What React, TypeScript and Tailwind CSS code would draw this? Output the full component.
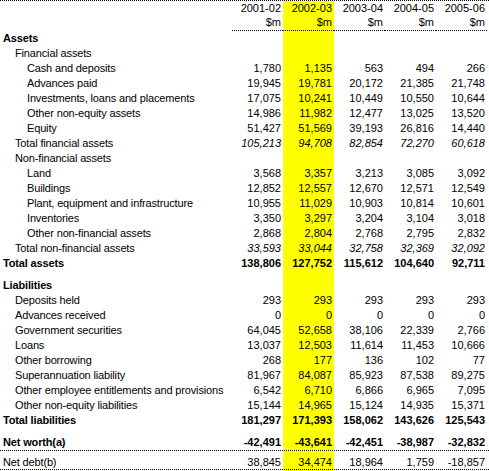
import clsx from "clsx";

type Row =
  | { spacer: number }
  | {
      label: string;
      level?: 0 | 1 | 2;
      values?: string[];
      bold?: boolean;
      italic?: boolean;
    };

const years = ["2001-02", "2002-03", "2003-04", "2004-05", "2005-06"];

const rows: Row[] = [
  { label: "Assets", level: 0, bold: true },
  { label: "Financial assets", level: 1 },
  { label: "Cash and deposits", level: 2, values: ["1,780", "1,135", "563", "494", "266"] },
  { label: "Advances paid", level: 2, values: ["19,945", "19,781", "20,172", "21,385", "21,748"] },
  { label: "Investments, loans and placements", level: 2, values: ["17,075", "10,241", "10,449", "10,550", "10,644"] },
  { label: "Other non-equity assets", level: 2, values: ["14,986", "11,982", "12,477", "13,025", "13,520"] },
  { label: "Equity", level: 2, values: ["51,427", "51,569", "39,193", "26,816", "14,440"] },
  { label: "Total financial assets", level: 1, italic: true, values: ["105,213", "94,708", "82,854", "72,270", "60,618"] },
  { label: "Non-financial assets", level: 1 },
  { label: "Land", level: 2, values: ["3,568", "3,357", "3,213", "3,085", "3,092"] },
  { label: "Buildings", level: 2, values: ["12,852", "12,557", "12,670", "12,571", "12,549"] },
  { label: "Plant, equipment and infrastructure", level: 2, values: ["10,955", "11,029", "10,903", "10,814", "10,601"] },
  { label: "Inventories", level: 2, values: ["3,350", "3,297", "3,204", "3,104", "3,018"] },
  { label: "Other non-financial assets", level: 2, values: ["2,868", "2,804", "2,768", "2,795", "2,832"] },
  { label: "Total non-financial assets", level: 1, italic: true, values: ["33,593", "33,044", "32,758", "32,369", "32,092"] },
  { label: "Total assets", level: 0, bold: true, values: ["138,806", "127,752", "115,612", "104,640", "92,711"] },
  { spacer: 7 },
  { label: "Liabilities", level: 0, bold: true },
  { label: "Deposits held", level: 1, values: ["293", "293", "293", "293", "293"] },
  { label: "Advances received", level: 1, values: ["0", "0", "0", "0", "0"] },
  { label: "Government securities", level: 1, values: ["64,045", "52,658", "38,106", "22,339", "2,766"] },
  { label: "Loans", level: 1, values: ["13,037", "12,503", "11,614", "11,453", "10,666"] },
  { label: "Other borrowing", level: 1, values: ["268", "177", "136", "102", "77"] },
  { label: "Superannuation liability", level: 1, values: ["81,967", "84,087", "85,923", "87,538", "89,275"] },
  { label: "Other employee entitlements and provisions", level: 1, values: ["6,542", "6,710", "6,866", "6,965", "7,095"] },
  { label: "Other non-equity liabilities", level: 1, values: ["15,144", "14,965", "15,124", "14,935", "15,371"] },
  { label: "Total liabilities", level: 0, bold: true, values: ["181,297", "171,393", "158,062", "143,626", "125,543"] },
  { spacer: 7 },
];

const pad = ["pl-[3px]", "pl-[15px]", "pl-[27px]"];

function Spacer({ h }: { h: number }) {
  return (
    <div className="flex" style={{ height: h }}>
      <div className="w-[232px]" />
      {years.map((y, i) => (
        <div key={y} className={clsx("w-[51px]", i === 1 && "bg-[#ffff00]")} />
      ))}
    </div>
  );
}

export default function App() {
  return (
    <div
      className="w-[489px] h-[471px] bg-white text-black text-[11px] border-t border-dotted border-black"
      style={{ fontFamily: '"Liberation Sans", Arial, sans-serif' }}
    >
      {/* header */}
      <div className="flex h-[14px] leading-[14px]">
        <div className="w-[232px]" />
        {years.map((y, i) => (
          <div key={y} className={clsx("w-[51px] pr-[2px] text-right", i === 1 && "bg-[#ffff00]")}>
            {y}
          </div>
        ))}
      </div>
      <div className="flex h-[16px] leading-[15px]">
        <div className="w-[232px]" />
        {years.map((y, i) => (
          <div
            key={y}
            className={clsx(
              "w-[51px] pr-[2px] text-right border-b border-dotted border-black",
              i === 1 && "bg-[#ffff00]"
            )}
          >
            $m
          </div>
        ))}
      </div>

      {rows.map((row, idx) => {
        if ("spacer" in row) return <Spacer key={idx} h={row.spacer} />;
        return (
          <div key={idx} className={clsx("flex h-[15px] leading-[15px]", row.bold && "font-bold")}>
            <div className={clsx("w-[232px] whitespace-nowrap tracking-[-0.15px]", pad[row.level ?? 0])}>
              {row.label}
            </div>
            {years.map((y, i) => (
              <div
                key={y}
                className={clsx(
                  "w-[51px] pr-[2px] text-right",
                  i === 1 && "bg-[#ffff00]",
                  row.italic && "italic"
                )}
              >
                {row.values?.[i]}
              </div>
            ))}
          </div>
        );
      })}

      {/* net worth */}
      <div className="flex h-[16px] leading-[15px] font-bold border-b border-dotted border-black">
        <div className="w-[232px] pl-[3px] tracking-[-0.15px]">Net worth(a)</div>
        {["-42,491", "-43,641", "-42,451", "-38,987", "-32,832"].map((v, i) => (
          <div key={i} className={clsx("w-[51px] pr-[2px] text-right", i === 1 && "bg-[#ffff00]")}>
            {v}
          </div>
        ))}
      </div>
      <Spacer h={4} />
      <div className="flex h-[15px] leading-[14px] border-b border-dotted border-black">
        <div className="w-[232px] pl-[3px] tracking-[-0.15px]">Net debt(b)</div>
        {["38,845", "34,474", "18,964", "1,759", "-18,857"].map((v, i) => (
          <div key={i} className={clsx("w-[51px] pr-[2px] text-right", i === 1 && "bg-[#ffff00]")}>
            {v}
          </div>
        ))}
      </div>
      <Spacer h={1} />
    </div>
  );
}
